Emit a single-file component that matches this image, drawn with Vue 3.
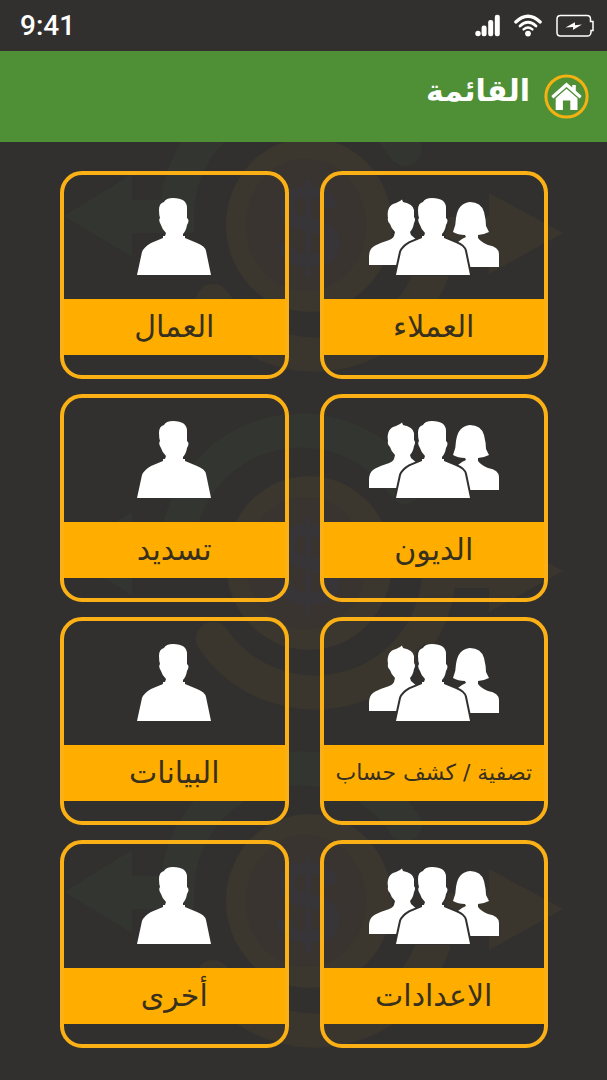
<script setup>
const rows = [
  [
    { label: 'العملاء', icon: 'group' },
    { label: 'العمال', icon: 'single' },
  ],
  [
    { label: 'الديون', icon: 'group' },
    { label: 'تسديد', icon: 'single' },
  ],
  [
    { label: 'تصفية / كشف حساب', icon: 'group', long: true },
    { label: 'البيانات', icon: 'single' },
  ],
  [
    { label: 'الاعدادات', icon: 'group' },
    { label: 'أخرى', icon: 'single' },
  ],
]
const items = rows.flat()
const emblems = [0, 1, 2]
const person =
  'M0 77L5 54Q7 49 14 45L26 40V38H28L29 35Q25 31 24 27Q21 22 23 20Q22 17 22 12Q22 5 27 4Q29 0 36 0Q50 0 50 10L50 20Q53 22 50 27Q49 33 46 36V38H48V40L60 45Q68 48 69 53L74 77Z'
</script>

<template>
  <div class="app" dir="rtl">
    <div class="status" dir="ltr">
      <span class="time">9:41</span>
      <div class="indicators">
        <svg width="26" height="23" viewBox="0 0 26 23" fill="#fff" aria-hidden="true">
          <circle cx="3" cy="19.5" r="2.7" />
          <rect x="6.6" y="11.5" width="5" height="10.7" rx="2.2" />
          <rect x="13.2" y="6" width="5" height="16.200" rx="2.2" />
          <rect x="19.8" y="0.8" width="5" height="21.400" rx="2.2" />
        </svg>
        <svg width="28" height="23" viewBox="0 0 28 23" fill="none" stroke="#fff" aria-hidden="true">
          <path d="M1.800 8Q14 -3.400 26.200 8" stroke-width="3.200" stroke-linecap="round" />
          <path d="M6 12Q14 4.600 22 12" stroke-width="2.800" stroke-linecap="round" />
          <path d="M9.600 15.400Q14 11.400 18.400 15.400" stroke-width="2.400" stroke-linecap="round" />
          <circle cx="14" cy="19.600" r="2.900" fill="#fff" stroke="none" />
        </svg>
        <svg width="40" height="24" viewBox="0 0 40 24" fill="none" stroke="#fff" aria-hidden="true">
          <path d="M5.500 1.500H32Q35.500 1.500 35.500 5V7.500H38V16.500H36V18.500Q35.500 22 32.500 22H5.500Q2 22 2 18.500V5Q2 1.500 5.500 1.500Z" stroke-width="1.500" />
          <path d="M10.500 13.500L20 8.300L20 11.200L27 10.600L17.800 16L18.200 13Z" fill="#fff" stroke="none" />
        </svg>
      </div>
    </div>

    <header class="bar">
      <button class="home" type="button" aria-label="القائمة">
        <svg viewBox="0 0 45 45" aria-hidden="true">
          <circle cx="22.500" cy="22.500" r="20.600" fill="none" stroke="#f3b211" stroke-width="3" />
          <g fill="#fff">
            <path d="M22.500 8.500L28.300 13.500V11H31.800V16.800L37.700 22L35.700 24.400L22.500 13L9.300 24.400L7.300 22Z" />
            <path d="M22.500 14.800L33.500 24.300V36H26.300V26.500H18.900V36H11.700V24.300Z" />
          </g>
        </svg>
      </button>
      <h1>القائمة</h1>
    </header>

    <main class="content">
      <div class="watermark" aria-hidden="true">
        <svg v-for="n in emblems" :key="n" viewBox="0 0 607 338">
          <ellipse cx="309" cy="169" rx="83" ry="87" fill="#3b362e" />
          <ellipse cx="306" cy="169" rx="60" ry="66" fill="#39342f" />
          <text x="308" y="212" text-anchor="middle" class="dollar">$</text>
          <path d="M177 177V161A124 124 0 0 1 405 93" fill="none" stroke="#323530" stroke-width="34" />
          <circle cx="405" cy="93" r="17" fill="#323530" />
          <path d="M64 160L132 118V144H177V177H132V201Z" fill="#323530" />
          <path d="M213 245A124 124 0 0 0 439 177V161" fill="none" stroke="#3a362e" stroke-width="34" />
          <circle cx="213" cy="245" r="17" fill="#3a362e" />
          <path d="M563 177L489 137V161H439V194H489V218Z" fill="#3a362e" />
        </svg>
      </div>

      <nav class="grid" aria-label="القائمة">
        <button v-for="item in items" :key="item.label" class="card" type="button">
          <span class="picture">
            <svg v-if="item.icon === 'group'" width="132" height="78" viewBox="0 0 132 78" aria-hidden="true">
              <g fill="#fff">
                <path d="M1 67V59Q1 52 5 49Q9 46 17 43.500Q25 41 26 38L27 34Q23 30 22 26Q19 23 20 20Q19 14 21 10Q23 6 28 5L32 3L34 1.500L35 4Q45 6 46 12V19Q48 21 46 25Q45 31 42 34L43 37L50 43L60 50V67Z" />
                <path d="M102 4Q113 4 116 14Q118 22 118 28L121 34Q115 37 110 37V40Q113 44 120 47Q131 49 131 56V69H95V48L90 44L94 41L98 39L97 37Q90 37 85 34Q88 27 88 20Q90 5 102 4Z" />
              </g>
              <g transform="translate(28)">
                <path :d="person" fill="#fff" stroke="#32302e" stroke-width="4" paint-order="stroke" />
              </g>
            </svg>
            <svg v-else width="76" height="78" viewBox="0 0 76 78" aria-hidden="true">
              <path transform="translate(1)" :d="person" fill="#fff" />
            </svg>
          </span>
          <span class="label" :class="{ long: item.long }">{{ item.label }}</span>
        </button>
      </nav>
    </main>
  </div>
</template>

<style>
body {
  background: #32302e;
}
</style>

<style scoped>
.app {
  min-height: 100vh;
  display: flex;
  flex-direction: column;
  background: #32302e;
  color: #fff;
  font-family: "DejaVu Sans", "Noto Sans", sans-serif;
}
.status {
  height: 51px;
  box-sizing: border-box;
  padding: 0 12px 0 20px;
  display: flex;
  align-items: center;
  justify-content: space-between;
}
.time {
  font-family: Roboto, sans-serif;
  font-size: 28px;
  font-weight: 500;
  line-height: 32px;
}
.indicators {
  display: flex;
  align-items: center;
  gap: 13px;
}
.bar {
  height: 91px;
  box-sizing: border-box;
  background: #4f9036;
  padding: 0 18px;
  display: flex;
  align-items: center;
  gap: 14px;
}
.home {
  width: 45px;
  height: 45px;
  padding: 0;
  border: 0;
  background: none;
  cursor: pointer;
}
.home svg {
  display: block;
}
h1 {
  margin: 0 0 12px;
  font-size: 30px;
  line-height: 40px;
  font-weight: 700;
}
.content {
  flex: 1;
  position: relative;
  overflow: hidden;
  padding: 29px 59px 30px 60px;
}
.watermark {
  position: absolute;
  inset: -86px 0 auto;
}
.watermark svg {
  display: block;
  width: 100%;
}
.dollar {
  font: 700 120px "Liberation Sans", sans-serif;
  fill: #373537;
}
.grid {
  position: relative;
  display: grid;
  grid-template-columns: 1fr 1fr;
  gap: 15px 31px;
}
.card {
  height: 208px;
  padding: 0 0 20px;
  border: 4px solid #fbb116;
  border-radius: 22px;
  background: none;
  color: #37301f;
  font: inherit;
  display: flex;
  flex-direction: column;
  cursor: pointer;
}
.picture {
  flex: 1;
  align-self: center;
  display: flex;
  align-items: center;
}
.picture svg {
  display: block;
}
.label {
  align-self: stretch;
  height: 56px;
  display: flex;
  align-items: center;
  justify-content: center;
  background: #ffae00;
  font-size: 30px;
  line-height: 36px;
  white-space: nowrap;
}
.label.long {
  font-size: 22px;
}
</style>
